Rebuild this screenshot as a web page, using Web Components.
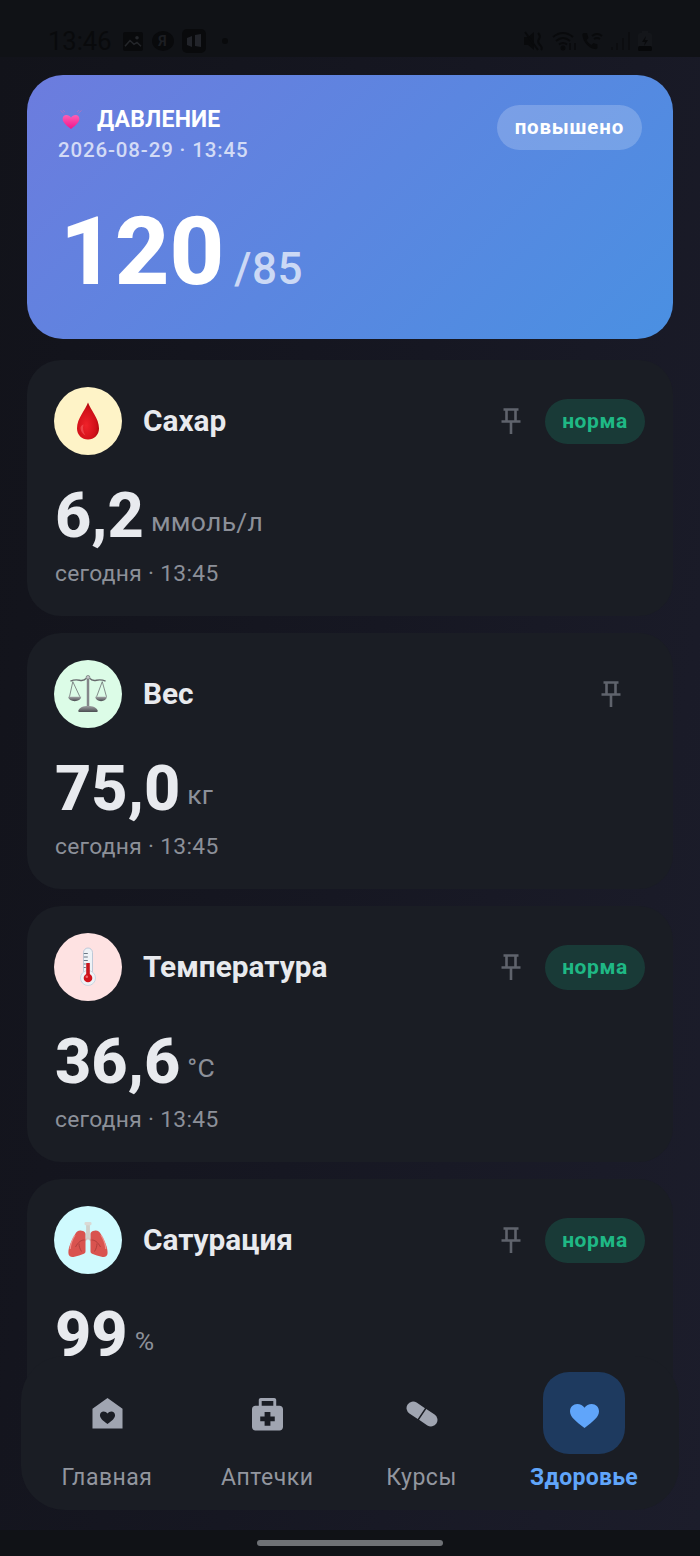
<!doctype html>
<html lang="ru">
<head>
<meta charset="utf-8">
<title>Здоровье</title>
<style>
  html, body { margin: 0; padding: 0; background: #12131a; }
  body { font-family: Roboto, "Noto Sans", sans-serif; }
</style>
</head>
<body>
<health-app>
  <status-bar slot="status" time="13:46"></status-bar>

  <pressure-card>
    <health-emoji slot="icon" kind="heart" size="24"></health-emoji>
    <span slot="title">ДАВЛЕНИЕ</span>
    <span slot="date">2026-08-29 · 13:45</span>
    <span slot="status">повышено</span>
    <span slot="sys">120</span>
    <span slot="dia">/85</span>
  </pressure-card>

  <metric-card status="1">
    <health-emoji slot="icon" kind="drop" bg="#fef3c7" size="40"></health-emoji>
    <span slot="name">Сахар</span>
    <span slot="value">6,2</span>
    <span slot="unit">ммоль/л</span>
    <span slot="time">сегодня · 13:45</span>
    <span slot="status">норма</span>
  </metric-card>

  <metric-card>
    <health-emoji slot="icon" kind="scales" bg="#dcfce7" size="38"></health-emoji>
    <span slot="name">Вес</span>
    <span slot="value">75,0</span>
    <span slot="unit">кг</span>
    <span slot="time">сегодня · 13:45</span>
  </metric-card>

  <metric-card status="1">
    <health-emoji slot="icon" kind="thermo" bg="#fee2e2" size="40"></health-emoji>
    <span slot="name">Температура</span>
    <span slot="value">36,6</span>
    <span slot="unit">°C</span>
    <span slot="time">сегодня · 13:45</span>
    <span slot="status">норма</span>
  </metric-card>

  <metric-card status="1">
    <health-emoji slot="icon" kind="lungs" bg="#cffafe" size="40"></health-emoji>
    <span slot="name">Сатурация</span>
    <span slot="value">99</span>
    <span slot="unit">%</span>
    <span slot="time">сегодня · 13:45</span>
    <span slot="status">норма</span>
  </metric-card>

  <bottom-nav slot="nav"></bottom-nav>
</health-app>

<script>
const PIN = `<svg width="24" height="28" viewBox="0 0 24 28" fill="none" stroke="#5f636c" stroke-width="2.6">
  <path d="M4.5 2.5h15M7.5 2.5v11M16.5 2.5v11M2.5 14.5h19M12 14.5V27" /></svg>`

const EMOJI = {
  heart: `<svg viewBox="0 0 24 24"><defs><linearGradient id="h" x1="0" y1="0" x2="0" y2="1"><stop offset="0" stop-color="#ff5fb4"/><stop offset="1" stop-color="#f0148c"/></linearGradient></defs>
    <path d="M12 21C6 16.5 3.6 13.8 3.6 10.8 3.6 8.5 5.3 7 7.3 7 9.2 7 11 8 12 9.7 13 8 14.8 7 16.7 7 18.7 7 20.4 8.5 20.4 10.8 20.4 13.8 18 16.5 12 21Z" fill="url(#h)"/>
    <path d="M1.5 2.5l3 2.5M22.5 2.5l-3 2.5M4 2l2 2M20 2l-2 2" stroke="#ee6aa8" stroke-width=".7" opacity=".7"/></svg>`,
  drop: `<svg viewBox="0 0 40 40"><defs><radialGradient id="d" cx=".42" cy=".62" r=".62"><stop offset="0" stop-color="#f0222a"/><stop offset=".72" stop-color="#d01018"/><stop offset="1" stop-color="#a8070d"/></radialGradient></defs>
    <path d="M20 1.5C22.5 9 31 17 31 27.5 31 34 26 38.5 20 38.5S9 34 9 27.5C9 17 17.5 9 20 1.5Z" fill="url(#d)"/>
    <path d="M12.5 27c0 3 2 6 5 7.5C15 31 14.5 27 15.5 23.5 13.5 24 12.5 25.5 12.5 27Z" fill="#f4545a" opacity=".7"/></svg>`,
  scales: `<svg viewBox="0 0 40 40" fill="none"><defs><linearGradient id="s" x1="0" y1="0" x2="0" y2="1"><stop offset="0" stop-color="#a0a2a4"/><stop offset="1" stop-color="#4a4d51"/></linearGradient></defs>
    <path d="M1.5 6.5Q6 4.5 11 5.5T18 3.5M38.5 6.5Q34 4.5 29 5.5T22 3.5" stroke="#66696c" stroke-width="1.5"/>
    <path d="M20 2.5V34" stroke="#84878a" stroke-width="2.6"/><circle cx="20" cy="2.5" r="2" fill="#c2c4c6" stroke="#66696c" stroke-width=".7"/>
    <path d="M4 7L.5 23M4 7l7.5 16M35 7l-6 16M35 7l4.5 16" stroke="#66696c" stroke-width=".8"/>
    <path d="M-1 23h14c-.7 3.2-3.4 4.5-7 4.5s-6.3-1.3-7-4.5ZM27.5 23h12.5c-.7 3.2-3 4.5-6.25 4.5s-5.55-1.3-6.25-4.5Z" fill="url(#s)"/>
    <path d="M10 37c1-3 5-4.5 10-4.5s9 1.5 10 4.5v2H10Z" fill="url(#s)"/></svg>`,
  thermo: `<svg viewBox="0 0 40 40"><rect x="15.5" y="1" width="9" height="28" rx="4.5" fill="#eef2f6" stroke="#aebfd2" stroke-width=".8"/>
    <circle cx="20" cy="31" r="7.5" fill="#eef2f6" stroke="#c2cfdc" stroke-width=".8"/>
    <rect x="18.2" y="16" width="3.6" height="14" fill="#c8141c"/><circle cx="20" cy="31" r="4.3" fill="#d0121b"/><circle cx="18.8" cy="29.8" r="1.3" fill="#ee6a6e"/>
    <path d="M15.8 6.5h4M15.8 10h4M15.8 13.5h4M15.8 17h2M15.8 20.5h2" stroke="#6b7785" stroke-width="1"/></svg>`,
  lungs: `<svg viewBox="0 0 40 40"><path d="M20 3v16" stroke="#cfcfca" stroke-width="3.8"/><rect x="16.5" y="2" width="7" height="3.2" rx="1.2" fill="#dad9d5"/>
    <path d="M20 18l-4.5 3.5M20 18l4.5 3.5" stroke="#d4c8c4" stroke-width="1.8"/>
    <path d="M15 11C11.5 9.5 8.5 11 7 14.5 3.5 21 .2 27 .4 33c.1 3.4 2.8 4.4 6 3.7 3-.7 6.5-1.7 9.5-3 1.2-.5 1.6-1.3 1.6-2.700V14c0-1.500-1-2.400-2.500-3Z" fill="#d9534f"/>
    <path d="M25 11C28.5 9.5 31.5 11 33 14.5 36.5 21 39.8 27 39.6 33c-.1 3.4-2.8 4.4-6 3.7-3-.7-6.5-1.7-9.5-3-1.2-.5-1.6-1.3-1.6-2.700V14c0-1.500 1-2.400 2.500-3Z" fill="#d9534f"/>
    <path d="M16.5 20c-3 0-6 1.5-9 7M11 23.5c0 3 1 5.5 2.5 8M23.5 20c3 0 6 1.5 9 7M29 23.5c0 3-1 5.5-2.5 8" stroke="#a63a38" stroke-width=".8" fill="none"/>
    <path d="M7 15c-2.500 4-4.500 9-4.800 14M33 15c2.500 4 4.500 9 4.800 14" stroke="#ee8f8b" stroke-width="1.3" fill="none"/></svg>`
}

class HealthEmoji extends HTMLElement {
  connectedCallback () {
    const bg = this.getAttribute('bg')
    const art = EMOJI[this.getAttribute('kind')]
    this.attachShadow({ mode: 'open' }).innerHTML = `
      <style>
        :host { display: flex; align-items: center; justify-content: center; flex: none; }
        :host([bg]) { width: 68px; height: 68px; border-radius: 50%; }
        svg { display: block; width: var(--w, 34px); height: var(--w, 34px); overflow: visible; }
      </style>${art}`
    if (bg) this.style.background = bg
    this.style.setProperty('--w', this.getAttribute('size') + 'px')
  }
}

class StatusBar extends HTMLElement {
  connectedCallback () {
    this.attachShadow({ mode: 'open' }).innerHTML = `
      <style>
        :host {
          display: flex; align-items: center; height: 57px; flex: none; box-sizing: border-box;
          padding: 25px 48px 0 48px; background: #101216; color: #090a0c;
        }
        .time { font: 400 25.5px/30px Roboto, sans-serif; margin-right: 11px; }
        .left { display: flex; align-items: center; }
        .right { display: flex; align-items: center; margin-left: auto; }
        .ya { width: 22px; height: 20px; border-radius: 50%; background: #090a0c; color: #1c1e22; font: 700 14px/20px Roboto, sans-serif; text-align: center; margin: 0 8px 0 9px; }
        .dot { width: 6px; height: 6px; border-radius: 50%; background: #090a0c; margin-left: 16px; }
        svg { display: block; }
      </style>
      <span class="time">${this.getAttribute('time')}</span>
      <div class="left">
        <svg width="20" height="19" viewBox="0 0 20 20" preserveAspectRatio="none"><path d="M2 0h16a2 2 0 0 1 2 2v16a2 2 0 0 1-2 2H2a2 2 0 0 1-2-2V2a2 2 0 0 1 2-2Z" fill="#090a0c"/><path d="M2 15l5-6 4 4 3-2 4 4" stroke="#24262a" stroke-width="1.5" fill="none"/><circle cx="14" cy="6" r="1.8" fill="#24262a"/></svg>
        <span class="ya">Я</span>
        <svg width="24" height="24" viewBox="0 0 24 24"><rect width="24" height="24" rx="5" fill="#090a0c"/><path d="M5 9l5-2v11l-5-2ZM13 6l6-1v13l-6-1Z" fill="#22242a"/></svg>
        <span class="dot"></span>
      </div>
      <div class="right">
        <svg width="20" height="20" viewBox="0 0 20 20"><path d="M0 6h4l6-5v18l-6-5H0Z" fill="#090a0c"/><path d="M14 2q3 3 1 6t1 6 1 5" stroke="#090a0c" stroke-width="2" fill="none"/><path d="M1 1l13 18" stroke="#090a0c" stroke-width="2"/></svg>
        <svg style="margin-left:8px" width="26" height="20" viewBox="0 0 26 20" fill="none" stroke="#090a0c" stroke-width="2"><path d="M1 6q10-8 20 0M4 10q7-6 14 0M7 13.5q4-3 8 0"/><circle cx="11" cy="17" r="1.5" fill="#090a0c"/><path d="M18 12v7M23 19v-7" stroke-width="1.5"/></svg>
        <svg style="margin-left:4px" width="24" height="20" viewBox="0 0 24 20"><path d="M2 2c-1 0-2 1-1.5 3 1 6 6 12 12 13 2 .5 3-.5 3-1.5v-3l-4-1.5-2 2c-2-1-4-3-5-5l2-2L5 2Z" fill="#090a0c"/><path d="M10 5q5-4 10 0M12 8q3-2 6 0" stroke="#090a0c" stroke-width="1.8" fill="none"/></svg>
        <svg style="margin-left:5px" width="19" height="18" viewBox="0 0 19 18" fill="#0c0d10"><rect x="0" y="15" width="2" height="3"/><rect x="5" y="11" width="2" height="7"/><rect x="11" y="6" width="2" height="12"/><rect x="17" y="0" width="2" height="18"/></svg>
        <svg style="margin-left:8px" width="14" height="20" viewBox="0 0 14 20"><path d="M4 0h6v2h2a2 2 0 0 1 2 2v14a2 2 0 0 1-2 2H2a2 2 0 0 1-2-2V4a2 2 0 0 1 2-2h2Z" fill="#14161a"/><rect y="15" width="14" height="5" rx="1.5" fill="#07080a"/><path d="M8 5L4 11h3l-1 4 4-6H7Z" fill="#090a0c"/></svg>
      </div>`
  }
}

const pressureTmpl = document.createElement('template')
pressureTmpl.innerHTML = `
  <style>
    :host {
      display: block; box-sizing: border-box; height: 264px; flex: none; margin-bottom: 4px; padding: 30px 31px 0 31px;
      border-radius: 36px; color: #fff; background: linear-gradient(135deg, #6c7cde 0%, #4a90e2 100%);
    }
    .top { display: flex; justify-content: space-between; align-items: flex-start; }
    .head { display: flex; align-items: center; gap: 14px; height: 30px; margin-left: 1px; }
    .title { font: 700 23px/30px Roboto, sans-serif; letter-spacing: .2px; }
    .date { font: 500 20.5px/30px Roboto, sans-serif; letter-spacing: .85px; color: rgba(255,255,255,.72); }
    .badge { height: 45px; box-sizing: border-box; padding: 0 18px; border-radius: 23px; background: rgba(255,255,255,.2); font: 700 20.5px/45px Roboto, sans-serif; letter-spacing: .8px; }
    .value { display: flex; align-items: baseline; gap: 10px; margin-top: 32px; margin-left: 2px; }
    .sys { font: 800 95px/110px Roboto, sans-serif; }
    .dia { font: 500 44px/50px Roboto, sans-serif; color: rgba(255,255,255,.7); letter-spacing: .5px; }
  </style>
  <div class="top">
    <div>
      <div class="head"><slot name="icon"></slot><span class="title"><slot name="title"></slot></span></div>
      <div class="date"><slot name="date"></slot></div>
    </div>
    <div class="badge"><slot name="status"></slot></div>
  </div>
  <div class="value"><span class="sys"><slot name="sys"></slot></span><span class="dia"><slot name="dia"></slot></span></div>`

class PressureCard extends HTMLElement {
  constructor () {
    super()
    this.attachShadow({ mode: 'open' })
    this.shadowRoot.appendChild(pressureTmpl.content.cloneNode(true))
  }
}

const metricTmpl = document.createElement('template')
metricTmpl.innerHTML = `
  <style>
    :host {
      display: block; box-sizing: border-box; height: 256px; flex: none; padding: 27px 28px 0 27px;
      border-radius: 34px; background: #1a1d24; color: #e8eaee;
    }
    .top { display: flex; align-items: center; height: 68px; }
    .name { margin-left: 21px; font: 700 29.8px/34px Roboto, sans-serif; flex: 1; }
    .pin { display: block; width: 24px; height: 28px; margin-right: 22px; }
    .badge { height: 45px; box-sizing: border-box; width: 100px; text-align: center; border-radius: 23px; background: #193a37; color: #1fb885; font: 700 21px/45px Roboto, sans-serif; letter-spacing: .6px; }
    :host(:not([status])) .badge { display: none; }
    .value { display: flex; align-items: center; gap: 7px; margin-top: 26px; margin-left: 1px; }
    .num { font: 800 63px/70px Roboto, sans-serif; }
    .unit { font: 400 26.5px/30px Roboto, sans-serif; color: #8c9099; letter-spacing: .3px; margin-top: 12px; }
    .time { font: 400 22.8px/30px Roboto, sans-serif; color: #8c9099; letter-spacing: .3px; margin-top: 8px; margin-left: 1px; }
  </style>
  <div class="top">
    <slot name="icon"></slot>
    <span class="name"><slot name="name"></slot></span>
    <span class="pin">${PIN}</span>
    <span class="badge"><slot name="status"></slot></span>
  </div>
  <div class="value"><span class="num"><slot name="value"></slot></span><span class="unit"><slot name="unit"></slot></span></div>
  <div class="time"><slot name="time"></slot></div>`

class MetricCard extends HTMLElement {
  constructor () {
    super()
    this.attachShadow({ mode: 'open' })
    this.shadowRoot.appendChild(metricTmpl.content.cloneNode(true))
  }
}

const NAV_ICONS = {
  home: `<svg style="margin-top:2px" width="31" height="32" viewBox="0 0 32 34" preserveAspectRatio="none"><path fill-rule="evenodd" fill="#a0a5b1" d="M16 0 31.5 11.5V32.5H.5V11.5ZM16 27.5c-5-3.7-7.8-6.3-7.8-9.3 0-2.3 1.8-3.9 3.8-3.9 1.6 0 3.1.9 4 2.3.9-1.4 2.4-2.3 4-2.3 2 0 3.8 1.6 3.8 3.9 0 3-2.8 5.6-7.8 9.3Z"/></svg>`,
  kit: `<svg style="margin-top:2px" width="31" height="33" viewBox="0 0 32 34" preserveAspectRatio="none"><path fill-rule="evenodd" fill="#a0a5b1" d="M9 0h14c1 0 2 1 2 2v6h3.5c2 0 3.5 1.5 3.5 3.5V30c0 2-1.5 3.5-3.5 3.5h-25C1.5 33.5 0 32 0 30V11.5C0 9.5 1.5 8 3.5 8H7V2c0-1 1-2 2-2Zm1 3v5h12V3ZM13 14.5v4.5H8.5v5H13v4.5h6V24h4.5v-5H19v-4.5Z"/></svg>`,
  pill: `<svg style="margin-top:1px" width="32" height="26" viewBox="0 0 32 26"><g fill="#a0a5b1" transform="rotate(33.7 16 13)"><path d="M15.2 6.5H5.2a6.5 6.5 0 0 0 0 13H15.2Z"/><path d="M16.8 6.5H26.8a6.5 6.5 0 0 1 0 13H16.8Z"/></g></svg>`,
  heart: `<svg style="margin-top:6px" width="29" height="24" viewBox="0 0 30 25" preserveAspectRatio="none"><path fill="#60a5fa" d="M15 25C5.5 17.5 0 13.5 0 7.5 0 3 3.5 0 7.5 0 10.5 0 13.5 1.5 15 4 16.5 1.5 19.5 0 22.5 0 26.5 0 30 3 30 7.5 30 13.5 24.5 17.5 15 25Z"/></svg>`
}

class BottomNav extends HTMLElement {
  connectedCallback () {
    const items = [
      ['home', 'Главная'], ['kit', 'Аптечки'], ['pill', 'Курсы'], ['heart', 'Здоровье', true]
    ]
    this.attachShadow({ mode: 'open' }).innerHTML = `
      <style>
        :host {
          position: absolute; left: 21px; right: 21px; top: 1356px; height: 154px; box-sizing: border-box; padding-top: 16px;
          display: grid; grid-template-columns: 172px 148.5px 160px 165px; border-radius: 44px; background: #1a1d24;
        }
        .item { display: flex; flex-direction: column; align-items: center; }
        .icon { width: 82px; height: 82px; display: flex; align-items: center; justify-content: center; border-radius: 26px; }
        .on .icon { background: #1e3a5f; }
        .label { font: 400 23px/30px Roboto, sans-serif; letter-spacing: .5px; color: #92969f; margin-top: 9px; }
        .on .label { font-weight: 700; color: #60a5fa; letter-spacing: .3px; }
        svg { display: block; }
      </style>
      ${items.map(([icon, label, on]) => `
        <div class="item ${on ? 'on' : ''}">
          <div class="icon">${NAV_ICONS[icon]}</div>
          <div class="label">${label}</div>
        </div>`).join('')}`
  }
}

const appTmpl = document.createElement('template')
appTmpl.innerHTML = `
  <style>
    :host { display: flex; flex-direction: column; position: relative; width: 700px; height: 1556px; overflow: hidden; }
    .scroll {
      flex: 1; min-height: 0; overflow: hidden; box-sizing: border-box; padding: 18px 27px 0 27px;
      display: flex; flex-direction: column; gap: 17px;
      background: linear-gradient(100deg, #12131a 0%, #161722 50%, #1c1d2b 100%);
    }
    .gesture { flex: none; height: 26px; background: #101216; display: flex; justify-content: center; padding-top: 10px; box-sizing: border-box; }
    .gesture i { display: block; width: 186px; height: 6px; border-radius: 3px; background: #6f7276; }
  </style>
  <slot name="status"></slot>
  <div class="scroll"><slot></slot></div>
  <div class="gesture"><i></i></div>
  <slot name="nav"></slot>`

class HealthApp extends HTMLElement {
  constructor () {
    super()
    this.attachShadow({ mode: 'open' })
    this.shadowRoot.appendChild(appTmpl.content.cloneNode(true))
  }
}

customElements.define('health-emoji', HealthEmoji)
customElements.define('status-bar', StatusBar)
customElements.define('pressure-card', PressureCard)
customElements.define('metric-card', MetricCard)
customElements.define('bottom-nav', BottomNav)
customElements.define('health-app', HealthApp)
</script>
</body>
</html>
